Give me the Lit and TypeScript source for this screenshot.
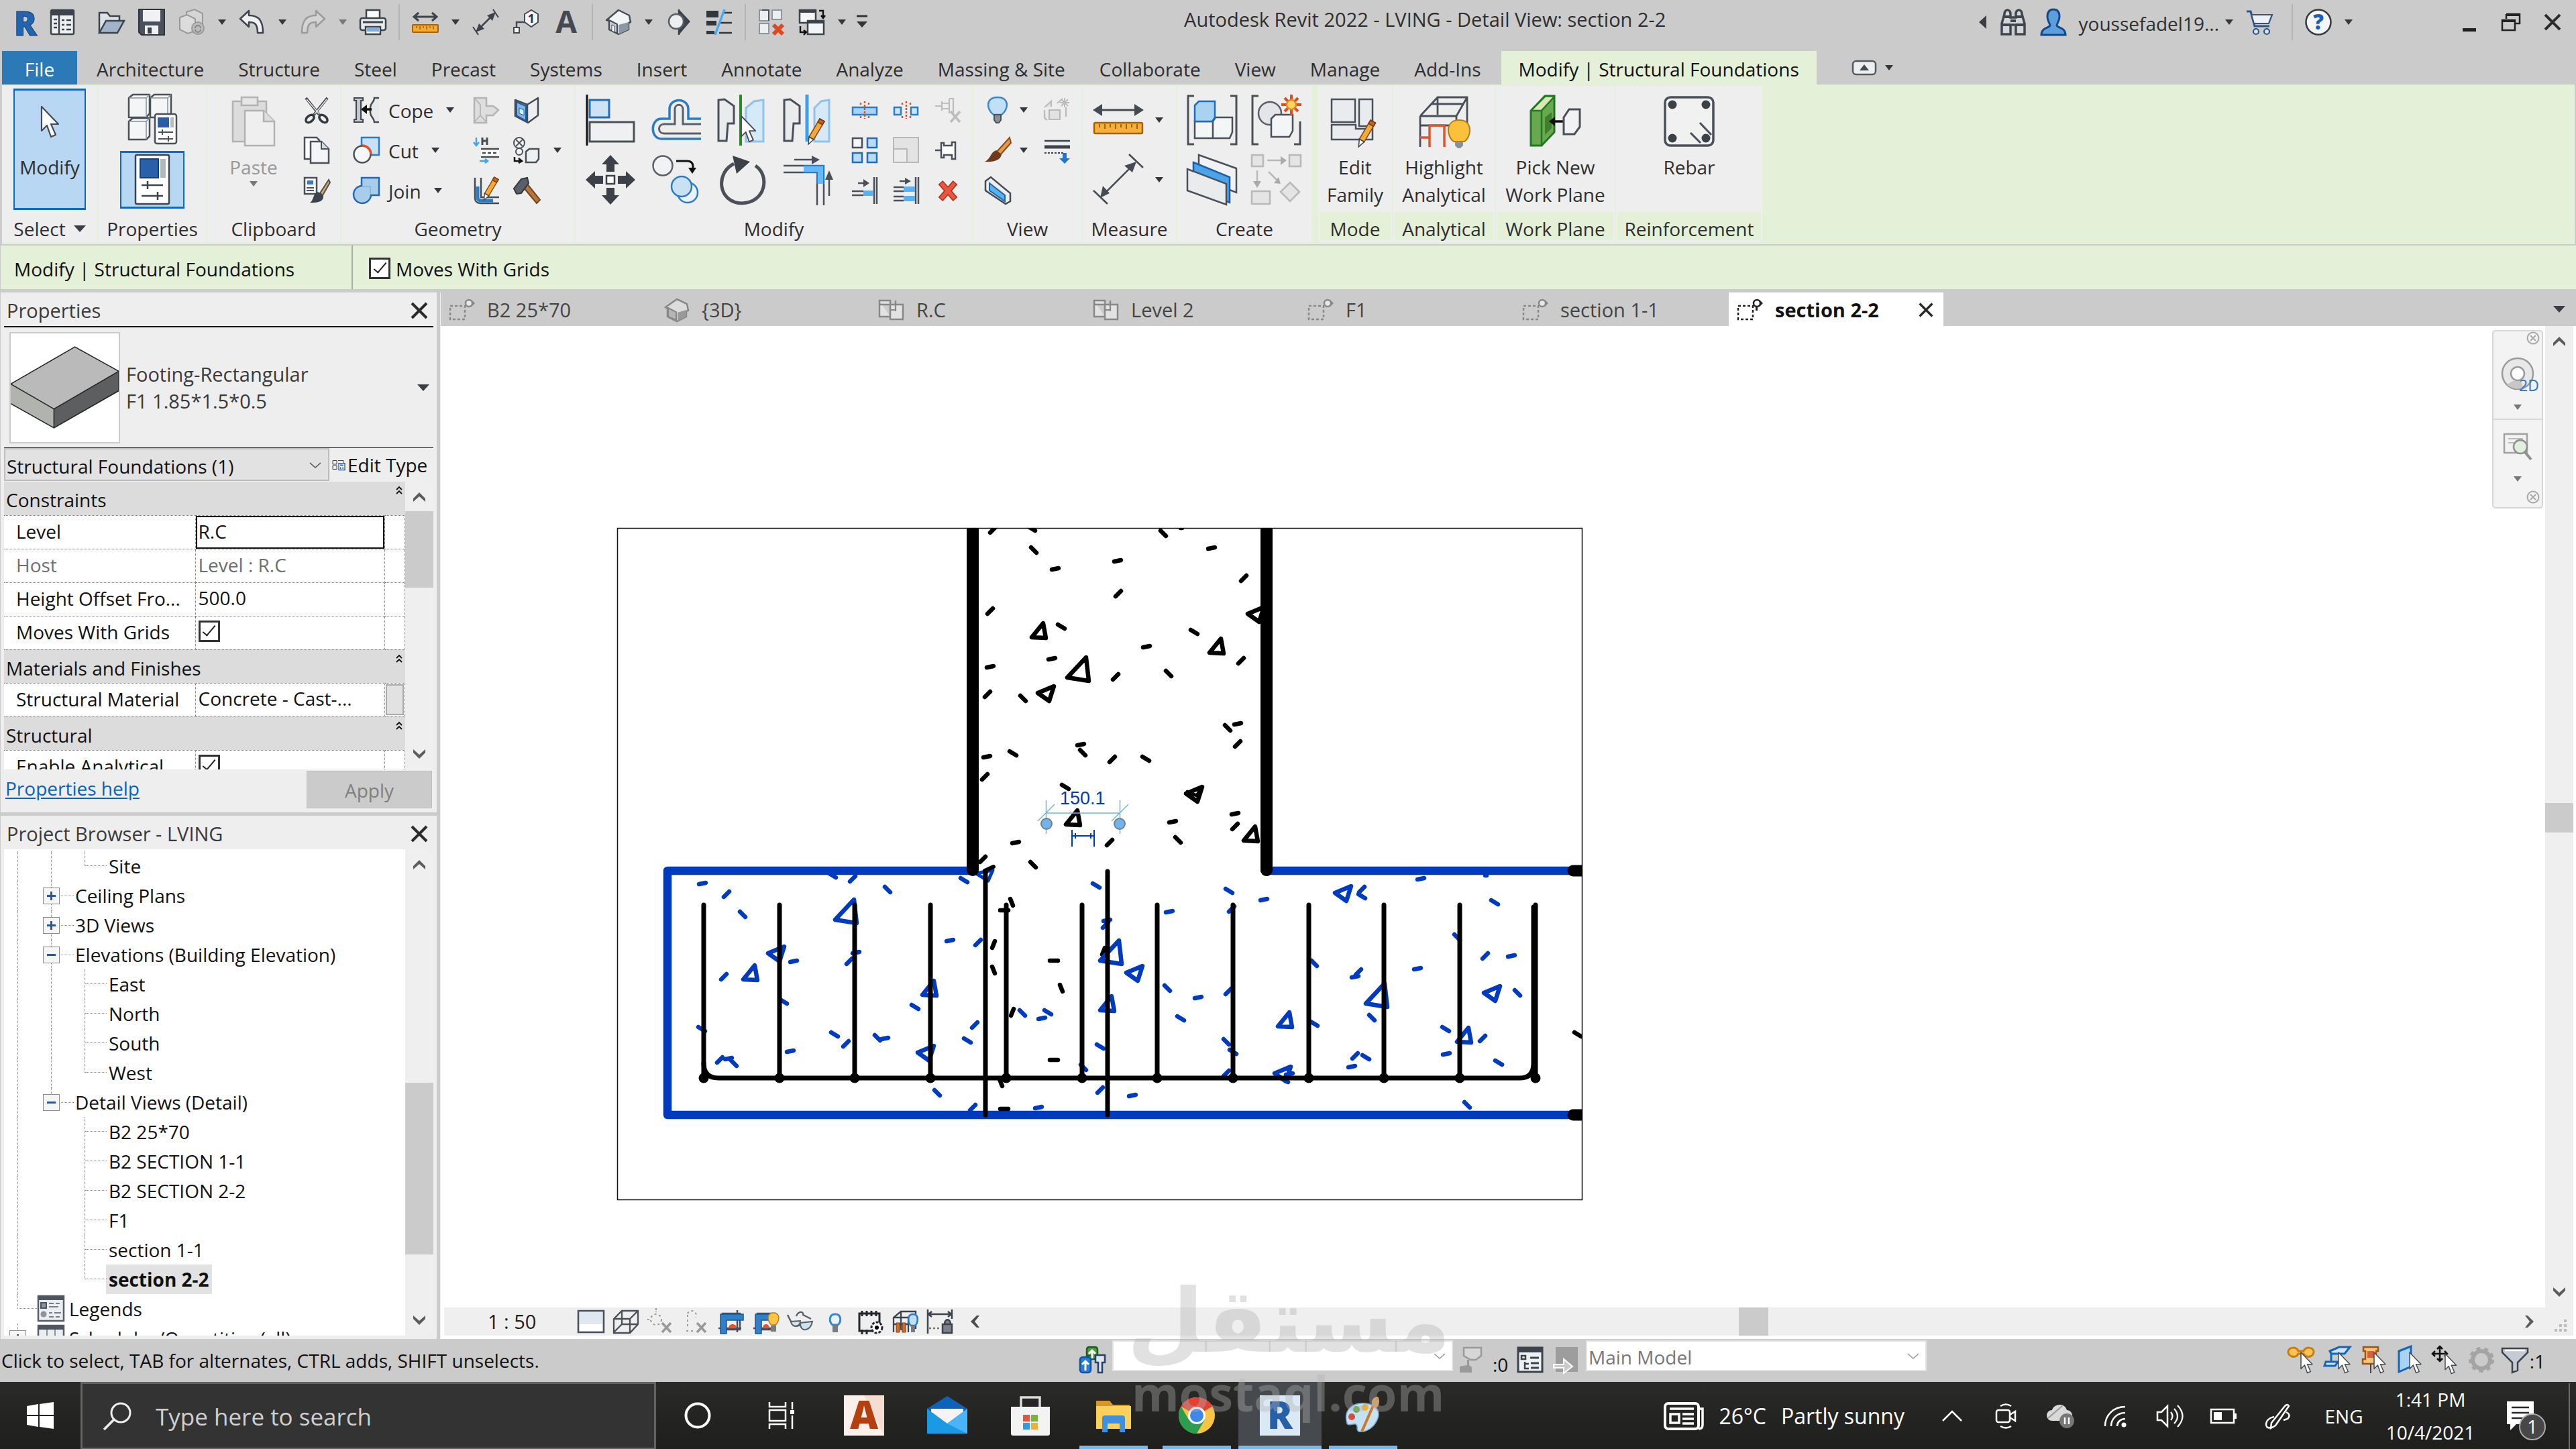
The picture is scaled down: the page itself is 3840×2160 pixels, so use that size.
import { LitElement, html, svg, css, nothing, SVGTemplateResult, TemplateResult } from "lit";
import { customElement } from "lit/decorators.js";

/* ---------- icon artwork ---------- */

const pencil = (x: number, y: number, k = 1) => svg`<g transform="translate(${x} ${y}) scale(${k})">
  <path d="M22 0l7 4-16 27-7-4z" fill="#f5a93b" stroke="#7a4a12" stroke-width="1.5"/><path d="M22 0l7 4-3 5-7-4z" fill="#c9601c" stroke="#7a3a12" stroke-width="1.5"/>
  <path d="M6 27l7 4-8 7z" fill="#fff" stroke="#444" stroke-width="1.5"/></g>`;
const cursor = (x: number, y: number, k = 1) => svg`<path transform="translate(${x} ${y}) scale(${k})" d="M0 0v36l8-8 6 17 7-3-7-16h11z" fill="#fff" stroke="#454a52" stroke-width="2.2" stroke-linejoin="round"/>`;
const cubes = (x: number, y: number, k = 1) => svg`<g transform="translate(${x} ${y}) scale(${k})" stroke="#4a505a" stroke-width="2.5" fill="#f4f5f6" stroke-linejoin="round">
  <path d="M1 6l6-5h25v28l-5 6H1zM33 6l6-5h25v28l-5 6H33zM1 41l6-5h25v27l-5 5H1z"/><path d="M1 6h26v29M33 6h26v29M1 41h26v27M27 6l5-5M59 6l5-5M27 41l5-5" fill="none" stroke="#8b9098" stroke-width="1.5"/></g>`;

const S: Record<string, [number, number, SVGTemplateResult]> = {
  appR: [40, 52, svg`<text x="20" y="46" font-size="50" font-weight="900" text-anchor="middle" fill="#2464ad" stroke="#153f77" stroke-width="1">R</text>`],
  home: [40, 40, svg`<rect x="3" y="2" width="34" height="36" rx="2" fill="#eef0f2" stroke="#3d434c" stroke-width="2.5"/><path d="M3 3h34v7H3z" fill="#3d434c"/><path d="M15 10v27" stroke="#3d434c" stroke-width="2.5"/><path d="M7 16h5M7 22h5M7 28h5M19 17h4M26 17h7M19 24h4M26 24h7M19 31h4M26 31h7" stroke="#3d434c" stroke-width="2.5"/>`],
  open: [40, 40, svg`<path d="M2 36V6h12l4 5h14v8" fill="#dde3e8" stroke="#3d434c" stroke-width="2.5"/><path d="M2 36l10-18h27L29 36z" fill="#9fb4c8" stroke="#3d434c" stroke-width="2.5"/>`],
  save: [40, 40, svg`<path d="M1 1h38v38H5l-4-4z" fill="#4a515c" stroke="#2e343c" stroke-width="2"/><path d="M7 2h26v17H7z" fill="#f0f1f2"/><path d="M10 25h20v13H10z" fill="#f0f1f2"/><path d="M14 28h6v9h-6z" fill="#3d434c"/>`],
  sync: [40, 40, svg`<path d="M12 5l12-4 12 6v18l-12 5-12-6z" fill="#d5d5d5" stroke="#999" stroke-width="2"/><path d="M2 13l11-4 12 6v18l-11 4-12-6z" fill="#dcdcdc" stroke="#999" stroke-width="2"/><circle cx="29" cy="29" r="9" fill="#bbb" stroke="#9a9a9a" stroke-width="2"/><path d="M25 29a4 4 0 0 1 8 0M33 31a4 4 0 0 1-8 0" stroke="#888" stroke-width="2" fill="none"/>`],
  undo: [40, 40, svg`<path d="M15 3L2 15l13 12v-7c8 0 13 2 13 16h8C36 18 30 10 15 10z" fill="#eff1f2" stroke="#3d434c" stroke-width="2.5" stroke-linejoin="round"/>`],
  redo: [40, 40, svg`<path d="M25 3l13 12-13 12v-7c-8 0-13 2-13 16H4C4 18 10 10 25 10z" fill="#d4d4d4" stroke="#9b9b9b" stroke-width="2.5" stroke-linejoin="round"/>`],
  print: [40, 40, svg`<path d="M10 2h20v13H10z" fill="#fafafa" stroke="#3d434c" stroke-width="2.5"/><rect x="1" y="14" width="38" height="18" rx="3" fill="#e8eaec" stroke="#3d434c" stroke-width="2.5"/><path d="M5 20h30" stroke="#3d434c" stroke-width="3"/><path d="M9 27h22v11H9z" fill="#fafafa" stroke="#3d434c" stroke-width="2.5"/><path d="M11 29h18v5H11z" fill="#79aede"/>`],
  measure: [40, 40, svg`<path d="M4 12h32M10 6l-7 6 7 6M30 6l7 6-7 6" stroke="#3d434c" stroke-width="3" fill="none"/><rect x="1" y="24" width="38" height="11" rx="1" fill="#f3ab35" stroke="#a7610c" stroke-width="2"/><path d="M7 26v3M12 26v5M17 26v3M22 26v5M27 26v3M32 26v5" stroke="#a7610c" stroke-width="1.5"/>`],
  dim: [40, 40, svg`<path d="M10 30L30 10" stroke="#3d434c" stroke-width="2.5"/><path d="M5 35l5-13 8 8zM35 5L22 10l8 8z" fill="#3d434c"/><path d="M31 1l8 12M1 27l8 12" stroke="#3d434c" stroke-width="2"/>`],
  tag: [40, 40, svg`<path d="M18 8l10-6 10 6v12l-10 7-10-7z" fill="#f5f6f7" stroke="#454b54" stroke-width="2"/><text x="28" y="21" font-size="18" text-anchor="middle" font-weight="700" fill="#2f353c">1</text><path d="M18 20H6v10" fill="none" stroke="#454b54" stroke-width="2.5"/><path d="M2 28h8v8H2z" fill="#fff" stroke="#454b54" stroke-width="2"/>`],
  textA: [40, 40, svg`<text x="20" y="36" font-size="46" font-weight="700" text-anchor="middle" fill="#454a51">A</text>`],
  house: [40, 40, svg`<path d="M2 17L20 2l16 8 2 10-3 1v10l-15 7-14-7V18z" fill="#f3f4f5" stroke="#454b54" stroke-width="2.4" stroke-linejoin="round"/><path d="M6 17l12 6v14L6 31z" fill="#bfc6ce" stroke="#454b54" stroke-width="2"/><path d="M20 24l15-4v11l-15 7z" fill="#8d98a5"/><path d="M10 24l4 2v9l-4-2z" fill="#fff" stroke="#454b54"/>`],
  section: [40, 40, svg`<path d="M20 1l17 18-17 20z" fill="#3d434c"/><path d="M20 1v38" stroke="#3d434c" stroke-width="2.5"/><circle cx="16" cy="19" r="11" fill="#eceeef" stroke="#5a6069" stroke-width="2.5"/>`],
  thin: [40, 40, svg`<path d="M1 3h18v10H1zM1 18h15v7H1zM1 33h12v5H1z" fill="#32373f"/><path d="M25 6h14M22 21h17M20 36h19" stroke="#32373f" stroke-width="2.5"/><path d="M28 1L14 39" stroke="#4aa9f0" stroke-width="3.5"/>`],
  closeHidden: [40, 40, svg`<path d="M2 2h14v16H2zM21 2h14v14H21zM2 22h14v15H2z" fill="#eceeef" stroke="#8f959d" stroke-width="2"/><path d="M6 2h10v16" fill="none" stroke="#4a505a" stroke-width="2"/><path d="M23 24l14 14M37 24L23 38" stroke="#dd4a22" stroke-width="6"/>`],
  switchWin: [40, 40, svg`<path d="M2 2h24v19H2z" fill="#f4f5f6" stroke="#3d434c" stroke-width="2.5"/><path d="M2 2h24v4H2zM14 18h24v5H14z" fill="#3d434c"/><path d="M14 18h24v20H14z" fill="#f4f5f6" stroke="#3d434c" stroke-width="2.5"/><path d="M14 18h24v4H14z" fill="#3d434c"/><path d="M31 3h6v10M34 10l3 4 3-4M3 26v9h8M8 32l4 3-4 4" stroke="#111" stroke-width="2.4" fill="none"/>`],
  custom: [30, 24, svg`<path d="M7 3h16" stroke="#333" stroke-width="3"/><path d="M7 11h16l-8 9z" fill="#333"/>`],
  arrow: [12, 8, svg`<path d="M0 0h12L6 8z" fill="#33383f"/>`],
  arrowG: [12, 8, svg`<path d="M0 0h12L6 8z" fill="#777"/>`],
  arrowL: [18, 10, svg`<path d="M0 0h18L9 10z" fill="#3a3f46"/>`],
  left: [12, 20, svg`<path d="M11 0v20L0 10z" fill="#3a3f46"/>`],
  binoc: [40, 40, svg`<path d="M7 8c0-8 9-8 9 0v5h8V8c0-8 9-8 9 0l4 14v16H24V24h-8v14H3V22z" fill="#d3d6da" stroke="#41464e" stroke-width="3.500"/><path d="M4 24h12M24 24h12M7 12h9M24 12h9M16 18h8" stroke="#41464e" stroke-width="4"/>`],
  user: [40, 40, svg`<path d="M20 1c7 0 9 5 9 11 0 6-3 8-4 13 2 4 13 3 13 14H2c0-11 11-10 13-14-1-5-4-7-4-13 0-6 2-11 9-11z" fill="#5c9fdd" stroke="#17498a" stroke-width="3"/>`],
  cart: [40, 40, svg`<path d="M1 4h6l6 22h22" fill="none" stroke="#2f5584" stroke-width="3"/><path d="M8 9h31l-5 13H12z" fill="#eef2f6" stroke="#2f5584" stroke-width="2.2"/><circle cx="15" cy="34" r="4" fill="#dfe6ee" stroke="#2f5584" stroke-width="2.2"/><circle cx="31" cy="34" r="4" fill="#dfe6ee" stroke="#2f5584" stroke-width="2.2"/>`],
  help: [40, 40, svg`<circle cx="20" cy="20" r="18.500" fill="#f4f6f8" stroke="#33383f" stroke-width="2.5"/><text x="20" y="31" font-size="31" font-weight="800" text-anchor="middle" fill="#1c5fb8">?</text>`],
  min: [30, 30, svg`<path d="M5 24h20v5H5z" fill="#222"/>`],
  restore: [32, 30, svg`<path d="M9 3h20v14H22M9 3v7M3 12h19v15H3z" fill="none" stroke="#222" stroke-width="2.5"/><path d="M9 2h20v4H9zM2 11h21v4H2z" fill="#222"/>`],
  close: [28, 28, svg`<path d="M3 3l22 22M25 3L3 25" stroke="#2b2b2b" stroke-width="4"/>`],
  ribMin: [38, 24, svg`<rect x="2" y="2" width="34" height="20" rx="5" fill="#eceef0" stroke="#545961" stroke-width="2.5"/><path d="M19 7l7 9H12z" fill="#454a52"/>`],

  cursorBig: [40, 52, cursor(8, 2, 1)],
  typeProps: [76, 76, svg`${cubes(2, 0, 1)}<rect x="42" y="30" width="32" height="44" rx="3" fill="#fff" stroke="#4a505a" stroke-width="2.5"/><rect x="46" y="35" width="17" height="15" fill="#2a5ea5"/><path d="M65 35h5v15h-5z" fill="#b7bcc3"/><path d="M47 57h22M53 53v8M47 67h22M62 63v8" stroke="#4a505a" stroke-width="2"/>`],
  props: [56, 76, svg`<rect x="3" y="1" width="50" height="73" rx="2" fill="#fff" stroke="#3f454e" stroke-width="2.5"/><rect x="10" y="7" width="27" height="28" fill="#2960a8" stroke="#173f78" stroke-width="2"/><path d="M40 7h8v28h-8z" fill="#b2b8c0"/><path d="M12 46h32M21 40v12M12 62h32M36 56v12" stroke="#3f454e" stroke-width="2.5"/>`],
  paste: [66, 76, svg`<path d="M2 8h50v60H2z" fill="#dcdcdc" stroke="#b2b2b2" stroke-width="2.5"/><path d="M15 2h24v12H15z" fill="#e6e6e6" stroke="#b2b2b2" stroke-width="2.5"/><path d="M20 22h28l16 16v36H20z" fill="#efefef" stroke="#b2b2b2" stroke-width="2.500"/><path d="M48 22v16h16" fill="#ddd" stroke="#b2b2b2" stroke-width="2.5"/>`],
  cut: [40, 40, svg`<path d="M4 2l20 25M36 2L16 27" stroke="#454a52" stroke-width="4"/><path d="M5 4l19 22M35 4L17 26" stroke="#f2f2f2" stroke-width="1.3"/><ellipse cx="10" cy="33" rx="7" ry="4.500" transform="rotate(-40 10 33)" fill="none" stroke="#33383f" stroke-width="3.5"/><ellipse cx="30" cy="33" rx="7" ry="4.500" transform="rotate(40 30 33)" fill="none" stroke="#33383f" stroke-width="3.5"/>`],
  copy: [40, 40, svg`<path d="M2 1h18l4 4v28H2z" fill="#fff" stroke="#4a505a" stroke-width="2.5"/><path d="M11 7h16l11 11v21H11z" fill="#f4f5f6" stroke="#4a505a" stroke-width="2.5"/><path d="M27 7v11h11" fill="#d5d9dd" stroke="#4a505a" stroke-width="2"/>`],
  match: [40, 40, svg`<path d="M2 1h18v24H2z" fill="#fff" stroke="#4a505a" stroke-width="2.5"/><path d="M6 5h9v6H6z" fill="#3b79c4"/><path d="M5 16h11M5 20h11" stroke="#4a505a" stroke-width="2"/><path d="M38 4L25 24l4 3L40 8z" fill="#e3a956" stroke="#4a505a" stroke-width="2"/><path d="M22 22l8 6c1 8-8 11-20 10 6-3 4-14 12-16z" fill="#3d434c"/>`],
  cope: [40, 40, svg`<path d="M2 2h13v4h-3v28h3v4H2v-4h3V6H2z" fill="#c8ccd1" stroke="#454b54" stroke-width="2.2"/><path d="M39 2h-7c0 6-6 8-6 14v8c0 6 6 8 6 14h7" fill="#e8e9eb" stroke="#454b54" stroke-width="2.5"/><path d="M28 19H17" stroke="#111" stroke-width="3.5"/><path d="M12 19l9-7v14z" fill="#111"/>`],
  cutGeo: [40, 40, svg`<path d="M13 1h26v26H13z" fill="#c7e1f5" stroke="#2d7bc4" stroke-width="2.5"/><circle cx="14" cy="26" r="12.500" fill="#f6f7f8" stroke="#4a505a" stroke-width="2.5"/><path d="M14 13a13 13 0 0 1 13 13" fill="none" stroke="#e0532c" stroke-width="3.5"/>`],
  join: [40, 40, svg`<path d="M13 1h26v26H27a13 13 0 1 1-14-14z" fill="#a8cdea" stroke="#2569b0" stroke-width="2.5"/><path d="M14 14h12v12" fill="none" stroke="#80b3de" stroke-width="1.5"/>`],
  copeG: [40, 40, svg`<path d="M2 2h18v12h10l8 6-8 8H20v11H2z" fill="#dedede" stroke="#b4b4b4" stroke-width="2.5"/><path d="M2 38l9-10V12L2 2M11 28l9 10" fill="none" stroke="#b4b4b4" stroke-width="1.8"/>`],
  wallOpen: [40, 40, svg`<path d="M3 5l18 7L37 2v26L22 39 3 29z" fill="#eceef0" stroke="#454b54" stroke-width="2.5" stroke-linejoin="round"/><path d="M21 12v26" stroke="#454b54" stroke-width="2.5"/><path d="M5 8l14 6v22L5 28z" fill="#7cb5e6" stroke="#23598f" stroke-width="2"/><path d="M9 17l7 3v8l-7-3z" fill="#d9ecfa" stroke="#23598f"/>`],
  beam: [40, 40, svg`<path d="M5 1v10M1 8l4 5 4-5" stroke="#43a3ec" stroke-width="2.5" fill="none"/><path d="M14 1v11M21 1v11M14 6h7" stroke="#454b54" stroke-width="3"/><path d="M12 18h27v12H12z" fill="#fff"/><path d="M12 18h27M12 30h27" stroke="#454b54" stroke-width="2.5"/><path d="M14 24h5M22 24h5M30 24h5" stroke="#454b54" stroke-width="2.5"/><path d="M10 36h11M18 33l4 3-4 3" stroke="#43a3ec" stroke-width="2.5" fill="none"/>`],
  split: [40, 40, svg`<circle cx="9" cy="9" r="8" fill="#f2f3f4" stroke="#4a505a" stroke-width="2"/><path d="M4 4l10 10M14 4L4 14" stroke="#4a505a" stroke-width="1.8"/><circle cx="9" cy="22" r="5" fill="#f2f3f4" stroke="#4a505a" stroke-width="2"/><path d="M2 30v6h10M8 32l5 4-5 3" stroke="#111" stroke-width="2.5" fill="none"/><path d="M19 22l5-4h14v15l-4 5H19z" fill="#eef0f1" stroke="#4a505a" stroke-width="2.5"/>`],
  wallJoin: [40, 40, svg`<path d="M3 1v30c0 5 3 8 8 8h28M12 1v29h27" stroke="#454b54" stroke-width="2.5" fill="none"/><path d="M7 14v16c0 4 2 5 5 5h18" stroke="#2d7bc4" stroke-width="5" fill="none"/>${pencil(12, 0, 0.9)}`],
  demolish: [40, 40, svg`<path d="M14 14l6-5 20 25-5 5z" fill="#b8743c" stroke="#6e431e" stroke-width="2"/><path d="M1 17L12 3l9-2 2 8-11 15-7 1z" fill="#59606b" stroke="#33383f" stroke-width="2"/>`],

  align: [76, 76, svg`<path d="M3 0v76" stroke="#111" stroke-width="3"/><rect x="7" y="8" width="29" height="26" fill="#cbe3f5" stroke="#1f6dbb" stroke-width="3"/><rect x="7" y="41" width="66" height="29" fill="#eff0f2" stroke="#4a505a" stroke-width="3"/>`],
  offset: [76, 76, svg`<path d="M75 36H56V22c0-18-28-18-28 0v14H16c-17 0-17 30 0 30h59" fill="none" stroke="#2d7bc4" stroke-width="3.5"/><path d="M75 44H48V22c0-9-12-9-12 0v22H20c-10 0-10 14 0 14h55" fill="none" stroke="#5a6069" stroke-width="3"/>`],
  mirrorPick: [76, 76, svg`<path d="M3 8l9-1 14 10v26h-9l-2 26H3z" fill="#e9ebed" stroke="#4a505a" stroke-width="3"/><path d="M70 8L56 10 44 20v50h26z" fill="#d6e9f7" stroke="#8fc3ea" stroke-width="3"/><path d="M36 0v76" stroke="#2a8a2a" stroke-width="4"/>${cursor(37, 32, 0.85)}`],
  mirrorDraw: [76, 76, svg`<path d="M3 8l9-1 14 10v26h-9l-2 26H3z" fill="#e9ebed" stroke="#4a505a" stroke-width="3"/><path d="M70 8L58 10 48 20v50h22z" fill="#d6e9f7" stroke="#8fc3ea" stroke-width="3"/><path d="M37 0v70" stroke="#419ee8" stroke-width="5"/>${pencil(34, 36, 1)}`],
  move: [76, 76, svg`<path d="M38 1l13 14h-7v11H32V15h-7zM38 75l13-14h-7V50H32v11h-7zM1 38l14-13v7h12v12H15v7zM75 38L61 25v7H49v12h12v7z" fill="#3b4049"/><rect x="32" y="32" width="12" height="12" fill="#fff" stroke="#3b4049" stroke-width="2.5"/>`],
  copyEl: [76, 76, svg`<circle cx="18" cy="17" r="14.500" fill="#f1f2f3" stroke="#5a6069" stroke-width="2.5"/><path d="M38 10h16c6 0 9 3 9 8v7" fill="none" stroke="#111" stroke-width="3"/><path d="M56 20h12l-6 9z" fill="#111"/><circle cx="55" cy="57" r="15" fill="#e8f3fb" stroke="#2d7bc4" stroke-width="2.5"/><circle cx="46" cy="48" r="15" fill="#c8e1f3" stroke="#2d7bc4" stroke-width="2.5"/>`],
  rotate: [76, 76, svg`<path d="M26 14C-2 28 2 72 38 73c36-1 42-42 20-56" fill="none" stroke="#4a5059" stroke-width="5"/><path d="M24 2l26 9-20 18z" fill="#3b4049"/>`],
  trim: [76, 76, svg`<path d="M18 8h30" stroke="#4a505a" stroke-width="2.5"/><path d="M44 2l12 6-12 7zM70 24l-6 14h12z" fill="#4a505a"/><path d="M2 17h30M2 27h30M52 44v32M62 44v32" stroke="#4a505a" stroke-width="2.5"/><path d="M32 17h30v27M32 27h20v17" stroke="#2d7bc4" stroke-width="2.5" fill="none"/><path d="M32 22h25v22" stroke="#63baf6" stroke-width="8" fill="none"/><path d="M70 34v28" stroke="#4a505a" stroke-width="2.5"/>`],
  splitEl: [40, 40, svg`<rect x="2" y="16" width="36" height="11" fill="#a7d3f5" stroke="#2d7bc4" stroke-width="2.5"/><path d="M20 7v26M14 9v5M26 9v5M14 29v5M26 29v5" stroke="#d4552b" stroke-width="2.5" stroke-dasharray="3 2"/>`],
  splitGap: [40, 40, svg`<rect x="2" y="16" width="10" height="11" fill="#cfe5f6" stroke="#2d7bc4" stroke-width="2.5"/><rect x="27" y="16" width="10" height="11" fill="#cfe5f6" stroke="#2d7bc4" stroke-width="2.5"/><path d="M20 7v26M14 9v5M26 9v5M14 29v5M26 29v5" stroke="#d4552b" stroke-width="2.5" stroke-dasharray="3 2"/>`],
  unpin: [40, 40, svg`<path d="M1 14h10M11 7v14M11 10h10M11 18h10M22 3v22M22 3h6v22" stroke="#bdbdbd" stroke-width="2.2" fill="none"/><path d="M24 22l14 16M38 22L24 38" stroke="#bdbdbd" stroke-width="3.5"/>`],
  array: [40, 40, svg`<path d="M2 2h14v14H2z" fill="#f5f6f7" stroke="#4a505a" stroke-width="2.5"/><path d="M24 2h14v14H24zM2 24h14v14H2zM24 24h14v14H24z" fill="#b9dbf4" stroke="#1f6dbb" stroke-width="2.5"/>`],
  scale: [40, 40, svg`<path d="M1 1h37v37H1z" fill="#e3e3e3" stroke="#b8b8b8" stroke-width="2"/><path d="M1 18h20v20H1z" fill="#ececec" stroke="#b8b8b8" stroke-width="2"/>`],
  pin: [40, 40, svg`<path d="M1 20h9" stroke="#4a505a" stroke-width="2.5"/><path d="M10 9h4v4h12V8h5v25h-5v-6H14v4h-4z" fill="#fff" stroke="#4a505a" stroke-width="2.5"/>`],
  extend1: [40, 40, svg`<path d="M10 9h12M34 0v40M38 0v40" stroke="#4a505a" stroke-width="2.5"/><path d="M18 3l9 6-9 6z" fill="#4a505a"/><path d="M1 21h17M1 27h17" stroke="#4a505a" stroke-width="2.5"/><path d="M18 24h14" stroke="#58b1f2" stroke-width="8"/>`],
  extend2: [40, 40, svg`<path d="M10 6h12M34 0v40M38 0v40" stroke="#4a505a" stroke-width="2.5"/><path d="M18 1l9 5-9 5z" fill="#4a505a"/><path d="M1 15h15M1 21h15M1 29h15M1 35h15" stroke="#4a505a" stroke-width="2.5"/><path d="M16 18h17M16 32h17" stroke="#58b1f2" stroke-width="8"/>`],
  del: [40, 40, svg`<path d="M9 8l22 25M31 8L9 33" stroke="#a9301a" stroke-width="9"/><path d="M10 9l20 23M30 9L10 32" stroke="#ea5540" stroke-width="6"/>`],
  bulb: [40, 40, svg`<path d="M20 1c18 0 17 18 6 26H14C3 19 2 1 20 1z" fill="#bfe0f8" stroke="#3f86c4" stroke-width="2.500"/><path d="M15 27h10v8l-3 4h-4l-3-4z" fill="#8a9099" stroke="#4a505a" stroke-width="2"/>`],
  displace: [40, 40, svg`<path d="M8 20h16v14H8zM1 16l10-9v8M20 10l8-7M33 16v14M1 20v12l4 3" fill="#e2e2e2" stroke="#bbb" stroke-width="2.2"/><path d="M31 2v14M24 9h14M26 4l10 10M36 4L26 14" stroke="#bbb" stroke-width="2"/>`],
  paint: [40, 40, svg`<path d="M38 1l2 8-16 18-6-4z" fill="#e39a4c" stroke="#8a4a18" stroke-width="2"/><path d="M18 20l8 6c-1 8-10 12-25 11 9-4 8-14 17-17z" fill="#6c3a1c"/>`],
  lineweight: [40, 40, svg`<path d="M1 6h38" stroke="#3d434c" stroke-width="2.5"/><path d="M1 15h38" stroke="#3d434c" stroke-width="5"/><path d="M1 24h30" stroke="#3d434c" stroke-width="2.2" stroke-dasharray="3 2"/><path d="M28 24h6v8h5l-8 8-8-8h5z" fill="#2476cc"/>`],
  linework: [40, 40, svg`<path d="M2 6l8-6 29 24v12l-7 4L2 20z" fill="#eceef0" stroke="#454b54" stroke-width="2.5"/><path d="M8 9l23 18v9L8 20z" fill="#58b1f2" stroke="#22659f" stroke-width="2"/>`],
  measureBig: [76, 76, svg`<path d="M8 23h60" stroke="#454b54" stroke-width="3"/><path d="M0 23l14-9v18zM76 23l-14-9v18z" fill="#454b54"/><rect x="2" y="42" width="72" height="16" rx="2" fill="#f5b03c" stroke="#a7610c" stroke-width="2.500"/><path d="M10 44v5M18 44v7M26 44v5M34 44v7M42 44v5M50 44v7M58 44v5M66 44v7" stroke="#a7610c" stroke-width="2"/>`],
  dimBig: [76, 76, svg`<path d="M16 60L60 16" stroke="#454b54" stroke-width="2.5"/><path d="M11 65l4-18 10 11zM65 11L47 17l12 10z" fill="#454b54"/><path d="M54 0l21 20M1 54l21 20" stroke="#454b54" stroke-width="2.5"/>`],
  group: [76, 76, svg`<path d="M11 2H2v72h9M65 2h9v72h-9" fill="none" stroke="#4a505a" stroke-width="3"/><path d="M12 40v25h27V40zM39 40l4-6h25v22l-4 9H39z" fill="#f4f5f6" stroke="#4a505a" stroke-width="2.5"/><path d="M12 16l6-6h24v24l-4 6H12z" fill="#a9d2f1" stroke="#1f6dbb" stroke-width="2.5"/>`],
  groupNew: [76, 76, svg`<path d="M11 2H2v72h9M73 40v34h-9" fill="none" stroke="#4a505a" stroke-width="3"/><circle cx="28" cy="28" r="17" fill="#e3e5e8" stroke="#5a6069" stroke-width="2.5"/><path d="M30 36l6-6h26v24l-5 9H30z" fill="#f4f5f6" stroke="#4a505a" stroke-width="2.5"/><path d="M60 0v30M45 15h30M50 5l20 20M70 5L50 25" stroke="#dd4f1f" stroke-width="4"/><circle cx="60" cy="15" r="7" fill="#ffd557" stroke="#e8862a" stroke-width="2.5"/>`],
  assembly: [76, 76, svg`<path d="M18 1l56 20v36l-56-22z" fill="#f1f2f3" stroke="#4a505a" stroke-width="2.5"/><path d="M10 12l54 22v38L10 50z" fill="#4ba3ea" stroke="#1b5ea5" stroke-width="2.5"/><path d="M1 22l58 22v31L1 54z" fill="#e9ebed" stroke="#4a505a" stroke-width="2.500"/>`],
  similar: [76, 76, svg`<g fill="#e4e4e4" stroke="#b9b9b9" stroke-width="2.500"><path d="M1 1h17v17H1zM57 1h17v17H57zM1 55h27v19H1zM58 42l14 14-14 14-14-14z"/><path d="M24 9h22M9 24v20M26 26l14 14" /></g><path d="M44 3l9 6-9 7zM3 40h12l-6 10zM44 44l-10-1 7-9z" fill="#aaa"/>`],
  editFamily: [76, 80, svg`<path d="M3 7h35v34H3zM44 7h20v40H44zM3 45h36v6h25v16H3z" fill="#e9ebee" stroke="#4a505a" stroke-width="2.5"/>${pencil(38, 38, 1.05)}`],
  highlight: [80, 80, svg`<g fill="none" stroke="#4a505a" stroke-width="2.8"><path d="M4 32L30 4h44v46M4 32h54M58 32L74 4M4 78V32M30 4v26M58 32v14M4 46h54M20 14h48"/></g><path d="M18 78V46h22v32M4 64h14" stroke="#e0562b" stroke-width="3.500" fill="none"/><path d="M62 38c22 0 18 26 8 32H54c-10-6-14-32 8-32z" fill="#fbc13a" stroke="#b57b16" stroke-width="2"/><path d="M56 70h12v6l-4 4h-4l-4-4z" fill="#8a9099"/>`],
  workPlane: [80, 80, svg`<path d="M3 24L24 2h14v54L19 76H3z" fill="#6aa84f" stroke="#1f7a1f" stroke-width="3"/><path d="M6 23L25 4h11L18 23z" fill="#dbe5b6"/><path d="M3 24h16v52M19 24L38 3" fill="none" stroke="#1f7a1f" stroke-width="2.500"/><path d="M24 34l10-8v24l-10 10z" fill="#3f7f2b"/><path d="M52 40H36" stroke="#111" stroke-width="3.5"/><path d="M30 40l9-7v14z" fill="#111"/><path d="M52 34l8-12h16v26l-8 11H52z" fill="#f1f2f3" stroke="#4a505a" stroke-width="3"/>`],
  rebar: [80, 80, svg`<rect x="4" y="4" width="72" height="72" rx="8" fill="#f1f1f1" stroke="#4a505a" stroke-width="3.500"/><g fill="#3b4049"><circle cx="15" cy="15" r="6.500"/><circle cx="65" cy="15" r="6.500"/><circle cx="15" cy="65" r="6.500"/><circle cx="65" cy="65" r="6.500"/></g><path d="M56 42l17 18M42 57l15 15" stroke="#4a505a" stroke-width="3"/>`],

  tabSection: [40, 36, svg`<path d="M2 12h22v20H2z" fill="none" stroke="#888" stroke-width="2.5" stroke-dasharray="4 3"/><path d="M30 14V4" stroke="#888" stroke-width="2.5"/><circle cx="30" cy="8" r="5" fill="#e8e8e8" stroke="#888" stroke-width="2.5"/><path d="M34 3l5 5-5 5z" fill="#888"/>`],
  tabSectionOn: [40, 36, svg`<path d="M2 12h22v20H2z" fill="none" stroke="#222" stroke-width="2.5" stroke-dasharray="4 3"/><circle cx="30" cy="8" r="5" fill="#fff" stroke="#222" stroke-width="2.5"/><path d="M34 3l5 5-5 5zM28 13h3v6h-3z" fill="#222"/>`],
  tab3d: [40, 36, svg`<path d="M3 14L20 2l15 7 2 10-3 1v8l-14 7-14-7V16z" fill="#dcdcdc" stroke="#888" stroke-width="2.500"/><path d="M7 15l12 6v12L7 28z" fill="#b5b5b5" stroke="#888" stroke-width="2"/><path d="M21 22l13-4v10l-13 6z" fill="#999"/>`],
  tabPlan: [40, 36, svg`<path d="M2 4h16v6H2zM2 4v24h16M26 4v6h11v22H18V10h8" fill="#e2e2e2" stroke="#888" stroke-width="2.500"/><path d="M18 18h8M26 10v10" stroke="#888" stroke-width="2.2"/>`],

  editType: [40, 32, svg`<path d="M2 3h12v11H2zM18 3h16v8M2 18h12v11H2z" fill="none" stroke="#444" stroke-width="2"/><path d="M20 11h18v20H20z" fill="#fff" stroke="#24528c" stroke-width="2.5"/><path d="M24 15h10v4H24z" fill="#2d6fc0"/><path d="M24 23h3M31 23h3M24 27h3M31 27h3" stroke="#24528c" stroke-width="2.500"/>`],
  chevD: [18, 9, svg`<path d="M1 1l8 7 8-7" fill="none" stroke="#555" stroke-width="1.6"/>`],
  up: [20, 16, svg`<path d="M1 11l9-9 9 9v5l-9-8-9 8z" fill="#5c5c5c"/>`],
  down: [20, 16, svg`<path d="M1 5l9 9 9-9V0l-9 8-9-8z" fill="#5c5c5c"/>`],
  rightCh: [16, 20, svg`<path d="M4 1l9 9-9 9H0l7-9-7-9z" fill="#5c5c5c"/>`],
  leftCh: [16, 20, svg`<path d="M12 1l-9 9 9 9h4L9 10l7-9z" fill="#4c4c4c"/>`],
  dblUp: [10, 14, svg`<path d="M1 6l4-4 4 4M1 12l4-4 4 4" fill="none" stroke="#111" stroke-width="1.800"/>`],
  legend: [40, 40, svg`<path d="M1 1h38v37H1z" fill="#eceef1" stroke="#555c66" stroke-width="2.500"/><path d="M1 1h38v6H1z" fill="#4d5561"/><path d="M5 11h8v8H5z" fill="#8d949e" stroke="#4d5561" stroke-width="2"/><circle cx="9" cy="28" r="4.500" fill="#8d949e"/><path d="M17 12h7M27 12h6M17 17h14M17 26h5M25 26h10M17 32h7M27 32h6" stroke="#777e89" stroke-width="2.200"/>`],
  sched: [40, 40, svg`<path d="M1 1h38v37H1z" fill="#eceef1" stroke="#555c66" stroke-width="2.500"/><path d="M1 1h38v6H1z" fill="#4d5561"/><path d="M14 7v30M26 7v30M1 17h38M1 27h38" stroke="#8d949e" stroke-width="2"/>`],

  vDetail: [40, 40, svg`<path d="M1 4h38v32H1z" fill="#dfe8f2" stroke="#4a505a" stroke-width="2.5"/><path d="M3 24h34v10H3z" fill="#fff"/>`],
  vCube: [40, 40, svg`<path d="M2 16L14 4h24v20L26 37H2zM2 16h24v20M26 16L38 4M14 4v20H38M14 24L2 36" fill="none" stroke="#4a505a" stroke-width="2.300"/>`],
  vSunOff: [40, 40, svg`<circle cx="13" cy="17" r="8" fill="none" stroke="#999" stroke-width="2" stroke-dasharray="3 4"/><path d="M13 0v6M0 17h4" stroke="#999" stroke-width="2" stroke-dasharray="3 2"/><path d="M22 22l13 14M35 22L22 36" stroke="#999" stroke-width="3.500"/>`],
  vShadowOff: [40, 40, svg`<path d="M8 8c4-8 16-3 12 6M8 10v18M6 34h12" fill="none" stroke="#999" stroke-width="2" stroke-dasharray="3 4"/><path d="M22 22l13 14M35 22L22 36" stroke="#999" stroke-width="3.500"/>`],
  vCrop: [40, 40, svg`<path d="M8 8h26v24H8zM2 30h34M30 3v33" fill="none" stroke="#4a505a" stroke-width="2.500"/><path d="M5 38V9h34v9H14v20z" fill="#2f7fc9" stroke="#1c5698" stroke-width="1.500"/><path d="M17 30c0-8 12-8 12 0z" fill="#e4552e"/>`],
  vCropShow: [40, 40, svg`<path d="M8 8h26v24H8zM2 30h34" fill="none" stroke="#4a505a" stroke-width="2.500"/><path d="M5 38V9h26v9H14v20z" fill="#2f7fc9" stroke="#1c5698" stroke-width="1.500"/><path d="M32 7c12 0 8 15 3 18h-6c-5-3-9-18 3-18z" fill="#ffc44a" stroke="#bb7e18" stroke-width="1.500"/><path d="M28 26h8v9h-8z" fill="#757c86"/><path d="M16 30c0-8 10-8 10 0z" fill="#e4552e"/>`],
  vGlasses: [40, 40, svg`<path d="M1 10l6 12c3 7 12 6 15 0" fill="none" stroke="#5a6069" stroke-width="2.500"/><path d="M14 12c3-8 12-8 10-1M24 10l12 6" fill="none" stroke="#5a6069" stroke-width="2.300"/><path d="M6 20c2 10 14 8 14-1z" fill="#d5e4ee" stroke="#5a6069" stroke-width="2"/><path d="M20 22c-1 14 15 14 18-2z" fill="#cfe3ee" stroke="#5a6069" stroke-width="2"/>`],
  vBulb: [40, 40, svg`<path d="M20 9c10 0 9 12 4 16h-8c-5-4-6-16 4-16z" fill="#e8f4fd" stroke="#3a86cc" stroke-width="3"/><path d="M16 26h8v10h-8z" fill="#757c86"/>`],
  vTemp: [40, 40, svg`<path d="M4 8h30v26H4z" fill="none" stroke="#23272d" stroke-width="3"/><path d="M8 4v8M15 4v8M22 4v8M29 4v8M8 32v7M15 32v7" stroke="#23272d" stroke-width="3"/><circle cx="30" cy="29" r="8" fill="#fff" stroke="#23272d" stroke-width="3" stroke-dasharray="4 2"/><circle cx="30" cy="29" r="3"/>`],
  vAnalytic: [40, 40, svg`<path d="M3 36V14L14 5h22v26M3 14h22M14 5v28M3 24h22M25 14v22" fill="none" stroke="#3d434c" stroke-width="2.300"/><path d="M7 22h5v14H7zM16 22h5v14h-5z" fill="#cf6a2b" stroke="#7f3c12"/><path d="M32 9c10 0 7 14 3 17h-6c-4-3-7-17 3-17z" fill="#bfe0fa" stroke="#2d7bc4" stroke-width="2.500"/><path d="M29 26h6v10h-6z" fill="#757c86"/>`],
  vConstr: [40, 40, svg`<path d="M2 2v36M38 2v14M2 9h36M8 5L3 9l5 4M32 5l5 4-5 4" stroke="#3d434c" stroke-width="2.500" fill="none"/><path d="M4 30h18" stroke="#777" stroke-width="2.500" stroke-dasharray="3 3"/><path d="M24 24h14v13H24zM27 24c0-9 9-9 9 0" fill="#7c828b" stroke="#3d434c" stroke-width="2.500"/>`],

  wheel: [60, 54, svg`<circle cx="26" cy="24" r="23" fill="#e8e8e8" stroke="#9b9b9b" stroke-width="2.500"/><circle cx="26" cy="24" r="10" fill="#fff" stroke="#9b9b9b" stroke-width="2.500"/><path d="M10 40a23 23 0 0 0 24 5l-3-10H19z" fill="#c6c6c6"/><text x="43" y="50" font-size="23" text-anchor="middle" fill="#2c78c8">2D</text>`],
  zoomReg: [44, 44, svg`<path d="M2 3h34v28H2z" fill="#f2f2f2" stroke="#a2a2a2" stroke-width="2.500"/><path d="M8 10h22M8 16h14" stroke="#bbb" stroke-width="2"/><circle cx="26" cy="22" r="10" fill="#dff0dc" stroke="#909090" stroke-width="2.500"/><path d="M33 30l9 11" stroke="#909090" stroke-width="4"/>`],
  circX: [20, 20, svg`<circle cx="10" cy="10" r="8.500" fill="none" stroke="#a8a8a8" stroke-width="2"/><path d="M6 6l8 8M14 6l-8 8" stroke="#a8a8a8" stroke-width="2"/>`],

  worksets: [40, 40, svg`<path d="M12 14V5q0-4 4-4h8q4 0 4 4v14h-9v-5z" fill="#4d9a3f" stroke="#17611a" stroke-width="2.500"/><path d="M20 18V7M15 11l5-5 5 5" stroke="#fff" stroke-width="3" fill="none"/><rect x="2" y="16" width="16" height="23" rx="4" fill="#2c7fd0" stroke="#0e55a4" stroke-width="2.500"/><path d="M10 36V22M5 27l5-5 5 5" stroke="#fff" stroke-width="3" fill="none"/><path d="M25 13h14v11h-4v15h-6V24h-4z" fill="#dfe6ef" stroke="#26416e" stroke-width="2.500"/>`],
  editReq: [40, 40, svg`<path d="M9 2h26v12L27 20h-8L9 14z" fill="#d6d6d6" stroke="#9a9a9a" stroke-width="2.500"/><path d="M14 20v8L3 30v9h18v-8l-4-3v-8z" fill="#999"/>`],
  designOpt: [40, 40, svg`<path d="M2 2h36v36H2z" fill="#eef1f4" stroke="#3d434c" stroke-width="3"/><path d="M2 2h36v7H2z" fill="#3d434c"/><path d="M7 14h6v5H7zM12 23v10h6M12 26h6" fill="none" stroke="#3d434c" stroke-width="2.500"/><path d="M20 17h13M21 25h12M21 32h12" stroke="#3d434c" stroke-width="3"/>`],
  addOpt: [40, 40, svg`<path d="M5 1h33v37H5z" fill="#9d9d9d"/><path d="M2 27h15v-8l13 11-13 10v-8H2z" fill="#cacaca" stroke="#fff" stroke-width="2"/>`],
  selLinks: [44, 42, svg`<path d="M2 8c2-6 12-7 15 0h8c3-7 13-6 15 0 1 8-10 12-15 4h-8c-4 8-16 4-15-4z" fill="#f7c256" stroke="#ca7d0a" stroke-width="3"/>${cursor(21, 10, 0.68)}`],
  selUnder: [44, 42, svg`<path d="M10 8l14-6h16l-8 10H12zM4 24h18l-4 6H2zM12 10v14" fill="#cfe5f6" stroke="#1566b8" stroke-width="3"/>${cursor(23, 10, 0.68)}`],
  selPin: [44, 42, svg`<path d="M6 2h22v6h-3v12h4v7H5v-7h4V8H6z" fill="#f5c67a" stroke="#a5510f" stroke-width="2.500"/><path d="M12 8h10v10H12z" fill="#de5b38"/><path d="M17 27v14" stroke="#444" stroke-width="2"/>${cursor(22, 10, 0.68)}`],
  selFace: [44, 42, svg`<path d="M5 8l18-7v30L5 39z" fill="#a8d3f3" stroke="#1566b8" stroke-width="3"/>${cursor(21, 10, 0.68)}`],
  selDrag: [44, 42, svg`<path d="M12 1v22M1 12h22M8 5l4-4 4 4M8 19l4 4 4-4M5 8l-4 4 4 4M19 8l4 4-4 4" stroke="#111" stroke-width="2.500" fill="none"/>${cursor(20, 12, 0.66)}`],
  gear: [40, 40, svg`<circle cx="20" cy="20" r="13" fill="none" stroke="#a4a4a4" stroke-width="6"/><circle cx="20" cy="20" r="17" fill="none" stroke="#a4a4a4" stroke-width="4" stroke-dasharray="6 6"/>`],
  filter: [40, 40, svg`<path d="M1 3h38v6L24 24v12l-8 3V24L1 9z" fill="#c3ccd5" stroke="#3d434c" stroke-width="2.500"/><path d="M5 6h30" stroke="#fff" stroke-width="2.500"/>`],

  start: [44, 44, svg`<path d="M2 8l17-3v16H2zM21 5l21-3v19H21zM2 23h17v16L2 36zM21 23h21v19l-21-3z" fill="#fff"/>`],
  search: [48, 48, svg`<circle cx="29" cy="18" r="14" fill="none" stroke="#eee" stroke-width="3"/><path d="M19 28L4 43" stroke="#eee" stroke-width="3.500"/>`],
  cortana: [44, 44, svg`<circle cx="22" cy="22" r="17.500" fill="none" stroke="#fff" stroke-width="4"/>`],
  taskview: [44, 44, svg`<path d="M5 2v7h24V2M5 42v-7h24v7M5 14h24v16H5z" fill="none" stroke="#fff" stroke-width="2.500"/><path d="M39 2v11M39 22v20" stroke="#fff" stroke-width="2.500"/><path d="M36 14h6v6h-6z" fill="#fff"/>`],
  autocad: [60, 60, svg`<path d="M0 0h60v60H0z" fill="#fbf0ea"/><path d="M30 0h30v60z" fill="#f6ddd2"/><text x="30" y="50" font-size="58" font-weight="800" text-anchor="middle" fill="#b4400f">A</text>`],
  mail: [60, 60, svg`<path d="M0 20L30 1l30 19v36H0z" fill="#0d63b8"/><path d="M6 20h48v24H6z" fill="#f4f4f4"/><path d="M0 20l30 22 30-22v37H0z" fill="#1b9ae4"/><path d="M60 20v37L30 42z" fill="#4bb4f8"/>`],
  store: [60, 60, svg`<path d="M16 20V3h28v17" fill="none" stroke="#ddd" stroke-width="3.500"/><path d="M1 17h58v40a3 3 0 0 1-3 3H4a3 3 0 0 1-3-3z" fill="#f3f3f3"/><path d="M19 29h10v10H19z" fill="#e4553f"/><path d="M31 29h10v10H31z" fill="#7bb43a"/><path d="M19 41h10v10H19z" fill="#2f9be0"/><path d="M31 41h10v10H31z" fill="#eab13a"/>`],
  folder: [60, 60, svg`<path d="M4 8h20l5 6h25v36H4z" fill="#d9972b"/><path d="M4 16h52v34H4z" fill="#fbd05d"/><path d="M13 55V34q0-4 4-4h26q4 0 4 4v21h-8V42H21v13z" fill="#3d92df"/>`],
  chrome: [60, 60, svg`<circle cx="30" cy="30" r="27" fill="#f6c545"/><path d="M30 30L6.600 16.500a27 27 0 0 1 46.800 0z" fill="#e34133"/><path d="M30 3a27 27 0 0 1 23.400 13.500H30z" fill="#e34133"/><path d="M6.600 16.500A27 27 0 0 0 30 57l11.700-20.200L18.300 36.800z" fill="#2c9e4f"/><circle cx="30" cy="30" r="13" fill="#fff"/><circle cx="30" cy="30" r="10" fill="#3e86e8"/>`],
  revit: [60, 60, svg`<path d="M0 0h60v60H0z" fill="#dbe8f5"/><text x="30" y="50" font-size="56" font-weight="900" text-anchor="middle" fill="#2560a8">R</text>`],
  palette: [60, 60, svg`<path d="M6 42C0 22 14 10 34 12c14 2 22 10 18 22-5 14-18 22-28 20-6-2 0-8-5-11-4-2-10 4-13-1z" fill="#c5e1f4" stroke="#7aa6c8" stroke-width="1.500"/><circle cx="13" cy="32" r="5" fill="#d94b3c"/><circle cx="20" cy="21" r="5" fill="#58a63c"/><circle cx="33" cy="18" r="5" fill="#f0b02d"/><path d="M50 4L28 54" stroke="#c97a2b" stroke-width="4"/><path d="M44 16c-4-8 2-14 8-14 4 6 2 14-3 17z" fill="#d99a5b"/>`],
  news: [60, 42, svg`<rect x="2" y="2" width="50" height="38" rx="5" fill="none" stroke="#fff" stroke-width="4"/><path d="M52 10h6v24q0 6-6 6" fill="none" stroke="#fff" stroke-width="3.500"/><path d="M9 10h36M28 18h17M28 25h17M28 32h17" stroke="#fff" stroke-width="3.500"/><path d="M10 18h13v13H10z" fill="none" stroke="#fff" stroke-width="3.500"/>`],
  chevU: [32, 18, svg`<path d="M2 16L16 2l14 14" fill="none" stroke="#fff" stroke-width="2.500"/>`],
  meet: [36, 40, svg`<rect x="3" y="11" width="20" height="18" rx="3" fill="none" stroke="#fff" stroke-width="2.500"/><path d="M23 18l8-5v14l-8-5M9 5q8-5 16 0M9 35q8 5 16 0" fill="none" stroke="#fff" stroke-width="2.500"/>`],
  cloud: [44, 38, svg`<path d="M9 26a8 8 0 0 1 0-16C12 0 28-1 31 10c10 0 11 16 2 16z" fill="#d9d9d9"/><path d="M3 22L24 4" stroke="#999" stroke-width="2"/><circle cx="31" cy="26" r="11" fill="#777"/><path d="M28 21v10M34 21v10" stroke="#fff" stroke-width="2.500"/>`],
  wifi: [36, 36, svg`<path d="M3 33C3 16 16 4 33 4M12 33c0-11 9-20 21-20M21 33c0-6 5-11 12-11" fill="none" stroke="#fff" stroke-width="2.500"/><circle cx="31" cy="31" r="3.500" fill="#fff"/>`],
  sound: [42, 38, svg`<path d="M3 13h6l9-9v30l-9-9H3z" fill="none" stroke="#fff" stroke-width="2.500"/><path d="M23 13q5 6 0 12M28 8q10 11 0 22M33 3q15 16 0 32" fill="none" stroke="#fff" stroke-width="2.200"/>`],
  battery: [42, 28, svg`<path d="M2 4h34v20H2z" fill="none" stroke="#fff" stroke-width="2.500"/><path d="M6 8h12v12H6z" fill="#fff"/><path d="M37 10h3v8h-3z" fill="#fff"/>`],
  pen: [44, 40, svg`<path d="M12 30L32 5q4-4 6 0L18 34l-7 4z" fill="none" stroke="#fff" stroke-width="2.500"/><path d="M16 21C0 24 2 40 10 37M34 14q8 4 2 10l-6 2" fill="none" stroke="#fff" stroke-width="2.500"/>`],
  notif: [64, 60, svg`<path d="M2 2h40v34H16L7 45V36H2z" fill="#fff"/><path d="M9 11h26M9 19h26M9 27h18" stroke="#2a2a2a" stroke-width="2.500"/><circle cx="40" cy="40" r="19" fill="#474747" stroke="#aaa" stroke-width="2"/><text x="40" y="50" font-size="27" text-anchor="middle" fill="#fff">1</text>`],
};

const icon = (name: string): TemplateResult => {
  const [w, h, art] = S[name];
  return html`<svg class="icon" width=${w} height=${h} viewBox="0 0 ${w} ${h}" aria-hidden="true">${art}</svg>`;
};

const base = css`
  :host { display: block; box-sizing: border-box; font-family: "Open Sans", "Noto Sans", sans-serif; font-size: 28px; line-height: 40px; color: #1e1e1e; }
  *, *::before, *::after { box-sizing: border-box; }
  button { font: inherit; color: inherit; background: none; border: 0; padding: 0; margin: 0; white-space: nowrap; }
  button, a { cursor: default; }
  select, input { font: inherit; color: inherit; margin: 0; border-radius: 0; }
  .icon { display: block; flex: none; overflow: visible; }
  svg text { font-family: "Open Sans", sans-serif; }
  .tick { appearance: none; width: 32px; height: 32px; flex: none; background: #fff; border: 3px solid #333; display: grid; place-items: center; }
  .tick:checked::before { content: ""; width: 9px; height: 20px; border: solid #222; border-width: 0 2px 2px 0; transform: translateY(-3px) rotate(40deg); }
`;

/* ---------- title bar, tabs and ribbon ---------- */

@customElement("rv-titlebar")
class Titlebar extends LitElement {
  static styles = [base, css`
    :host { background: #cbcbcb; color: #2e2e2e; }
    .bar { display: grid; grid-template-columns: auto 1fr auto; height: 76px; padding: 0 4px 10px 8px; }
    .group { display: flex; align-items: center; }
    .cell { width: 60px; height: 56px; display: grid; place-items: center; }
    .home { width: 50px; margin-right: 18px; }
    .drop { width: 30px; height: 56px; display: grid; place-items: center; }
    .sep { width: 18px; height: 56px; display: grid; place-items: center; }
    .sep::before { content: ""; width: 2px; height: 54px; background: #b4b4b4; }
    .title { font: inherit; font-size: 29px; margin: 0; padding: 0 0 8px 8px; align-self: center; text-align: center; white-space: nowrap; }
    .win { width: 62px; }
    .first { margin-left: 134px; }
    .user { padding: 4px 0 0 8px; }
    .shop { margin-right: 10px; }
  `];
  render() {
    const quick = ["open", "save", "sync", ">", "undo", ">", "redo", "<", "print", "|", "measure", ">", "dim", "tag", "textA", "|", "house", ">", "section", "thin", "|", "closeHidden", "switchWin", ">"];
    return html`<header class="bar">
      <div class="group">
        <button class="cell" aria-label="Application menu">${icon("appR")}</button>
        <button class="cell home" aria-label="Home">${icon("home")}</button>
        ${quick.map((q) => q === "|" ? html`<span class="sep"></span>`
          : q === ">" ? html`<button class="drop" aria-label="More">${icon("arrow")}</button>`
          : q === "<" ? html`<button class="drop" aria-label="More" disabled>${icon("arrowG")}</button>`
          : html`<button class="cell" aria-label=${q}>${icon(q)}</button>`)}
        <button class="drop" aria-label="Customize toolbar">${icon("custom")}</button>
      </div>
      <h1 class="title">Autodesk Revit 2022 - LVING - Detail View: section 2-2</h1>
      <div class="group">
        <button class="drop" aria-label="Collapse search">${icon("left")}</button>
        <button class="cell" aria-label="Search">${icon("binoc")}</button>
        <button class="cell" aria-label="Account">${icon("user")}</button>
        <button class="user">youssefadel19...</button>
        <button class="drop" aria-label="Account menu">${icon("arrow")}</button>
        <button class="cell shop" aria-label="App store">${icon("cart")}</button>
        <span class="sep"></span>
        <button class="cell" aria-label="Help">${icon("help")}</button>
        <button class="drop" aria-label="Help menu">${icon("arrow")}</button>
        <button class="cell win first" aria-label="Minimize">${icon("min")}</button>
        <button class="cell win" aria-label="Restore">${icon("restore")}</button>
        <button class="cell win" aria-label="Close">${icon("close")}</button>
      </div>
    </header>`;
  }
}

@customElement("rv-ribbon")
class Ribbon extends LitElement {
  static styles = [base, css`
    :host { background: #cbcbcb; padding-left: 3px; color: #2e2e2e; }
    .tabs { display: flex; height: 50px; align-items: stretch; }
    .tab { padding: 3px 26px 0 25px; }
    .tab.file { background: #2b79b6; color: #fff; width: 112px; padding: 3px 0 0; margin-right: 4px; }
    .tab.on { background: #e5f0d8; color: #111; padding: 3px 26px 0; margin-left: 4px; }
    .state { margin-left: 52px; display: flex; align-items: center; gap: 12px; }
    .panels { display: flex; background: #e5f0d8; padding: 2px 0 3px; margin-right: 2px; border-bottom: 2px solid #cbcbcb; }
    .panel { display: flex; flex-direction: column; background: #eee; border-right: 2px solid #e5f0d8; height: 233px; }
    .body { height: 188px; display: flex; justify-content: center; }
    .name { height: 45px; padding-top: 4px; text-align: center; white-space: nowrap; display: flex; gap: 12px; justify-content: center; align-items: center; }
    .select { width: 144px; } .properties { width: 162px; } .clipboard { width: 200px; } .geometry { width: 349px; }
    .modify { width: 593px; } .view { width: 163px; } .measure { width: 141px; } .create { width: 202px; margin-right: 8px; }
    .mode { width: 112px; } .analytical { width: 153px; } .workplane { width: 179px; } .reinforcement { width: 220px; }
    .context .name { background: #e5f0d8; margin: 0 2px 3px; height: 42px; padding-top: 7px; }
    .big { display: flex; flex-direction: column; align-items: center; padding-top: 13px; white-space: pre; line-height: 41px; }
    .big .icon { margin-bottom: 8px; }
    .big.off { color: #999; width: 138px; }
    .big .icon + span { display: block; text-align: center; }
    .big.tall .icon:first-child { height: 80px; }
    .arm { margin-top: 4px; width: 108px; height: 181px; padding-top: 22px; background: #b8d7f3; border: solid #0d69c4; border-width: 3px 2px; }
    .arm .icon { margin-bottom: 20px; }
    .stack { display: flex; flex-direction: column; align-items: center; }
    .stack .top { height: 97px; padding-top: 3px; display: grid; place-items: center; }
    .stack .armed { width: 96px; height: 86px; display: grid; place-items: center; background: #b8d7f3; border: solid #0d69c4; border-width: 3px 2px; }
    .col { display: grid; grid-auto-rows: 60px; padding-top: 6px; align-items: center; justify-items: center; align-content: start; }
    .c50 { width: 50px; } .c62 { width: 62px; } .c80 { width: 80px; }
    .geo { width: 196px; justify-items: start; padding-left: 17px; }
    .row { display: flex; align-items: center; gap: 13px; }
    .row span { padding-top: 2px; }
    .row .icon + span + .icon { margin-left: 6px; }
    .start .body { justify-content: flex-start; }
    .large { display: grid; grid-auto-rows: 89px; padding-top: 6px; place-items: center; align-content: start; }
    .four { grid-template-columns: repeat(4, 98px); margin: 0 5px 0 3px; }
    .two { grid-template-columns: repeat(2, 96px); }
    .meas { grid-template-columns: 76px 46px; padding-left: 15px; }
    .vcol { grid-template-columns: 60px 29px 60px; padding-left: 6px; }
    .vcol .drop { justify-self: start; padding-left: 3px; }
    .options { display: flex; align-items: stretch; height: 65px; background: #e5f0d8; margin-left: -3px; color: #111; border-left: 1px solid #cbcbcb; }
    .mode-name { width: 523px; padding-left: 20px; line-height: 70px; }
    .opt { border-left: 2px solid #aaa; display: flex; align-items: center; gap: 8px; padding: 3px 0 0 24px; }
    .opt label { padding-top: 2px; }
    .foot { height: 5px; }
  `];
  private btn(name: string) { return html`<button aria-label=${name}>${icon(name)}</button>`; }
  private panel(cls: string, title: unknown, body: unknown) {
    return html`<section class="panel ${cls}"><div class="body">${body}</div><div class="name">${title}</div></section>`;
  }
  render() {
    const tabs = ["Architecture", "Structure", "Steel", "Precast", "Systems", "Insert", "Annotate", "Analyze", "Massing & Site", "Collaborate", "View", "Manage", "Add-Ins"];
    return html`
      <nav class="tabs">
        <button class="tab file">File</button>
        ${tabs.map((t) => html`<button class="tab">${t}</button>`)}
        <button class="tab on">Modify | Structural Foundations</button>
        <button class="state" aria-label="Ribbon display">${icon("ribMin")}${icon("arrow")}</button>
      </nav>
      <div class="panels">
        ${this.panel("select", html`Select ${icon("arrowL")}`, html`<button class="big arm">${icon("cursorBig")}<span>Modify</span></button>`)}
        ${this.panel("properties", "Properties", html`<div class="stack"><button class="top" aria-label="Type properties">${icon("typeProps")}</button><button class="armed" aria-label="Properties palette">${icon("props")}</button></div>`)}
        ${this.panel("clipboard start", "Clipboard", html`<button class="big off tall" disabled>${icon("paste")}<span>Paste</span>${icon("arrowG")}</button><div class="col c50">${["cut", "copy", "match"].map(this.btn)}</div>`)}
        ${this.panel("geometry start", "Geometry", html`
          <div class="col geo">${[["cope", "Cope"], ["cutGeo", "Cut"], ["join", "Join"]].map(([i, t]) => html`<button class="row">${icon(i)}<span>${t}</span>${icon("arrow")}</button>`)}</div>
          <div class="col">${["copeG", "beam", "wallJoin"].map(this.btn)}</div>
          <div class="col c80">${["wallOpen", "split", "demolish"].map(this.btn)}</div>
          <div class="col"><span></span>${icon("arrow")}</div>`)}
        ${this.panel("modify start", "Modify", html`
          <div class="large four">${["align", "offset", "mirrorPick", "mirrorDraw", "move", "copyEl", "rotate", "trim"].map(this.btn)}</div>
          <div class="col c62">${["splitEl", "array", "extend1"].map(this.btn)}</div>
          <div class="col c62">${["splitGap", "scale", "extend2"].map(this.btn)}</div>
          <div class="col c62">${["unpin", "pin", "del"].map(this.btn)}</div>`)}
        ${this.panel("view start", "View", html`<div class="col vcol">
          ${this.btn("bulb")}<span class="drop">${icon("arrow")}</span>${this.btn("displace")}
          ${this.btn("paint")}<span class="drop">${icon("arrow")}</span>${this.btn("lineweight")}
          ${this.btn("linework")}</div>`)}
        ${this.panel("measure start", "Measure", html`<div class="large meas">${this.btn("measureBig")}${icon("arrow")}${this.btn("dimBig")}${icon("arrow")}</div>`)}
        ${this.panel("create", "Create", html`<div class="large two">${["group", "groupNew", "assembly", "similar"].map(this.btn)}</div>`)}
        ${this.panel("mode context", "Mode", html`<button class="big">${icon("editFamily")}<span>Edit
Family</span></button>`)}
        ${this.panel("analytical context", "Analytical", html`<button class="big">${icon("highlight")}<span>Highlight
Analytical</span></button>`)}
        ${this.panel("workplane context", "Work Plane", html`<button class="big">${icon("workPlane")}<span>Pick New
Work Plane</span></button>`)}
        ${this.panel("reinforcement context", "Reinforcement", html`<button class="big">${icon("rebar")}<span>Rebar</span></button>`)}
      </div>
      <div class="options">
        <span class="mode-name">Modify | Structural Foundations</span>
        <div class="opt"><input class="tick" type="checkbox" id="grids" checked><label for="grids">Moves With Grids</label></div>
      </div>
      <div class="foot"></div>`;
  }
}

/* ---------- scroll bar ---------- */

@customElement("rv-scroll")
class Scroll extends LitElement {
  static properties = { before: { type: Number }, size: { type: Number }, after: { type: Number } };
  declare before: number;
  declare size: number;
  declare after: number;
  static styles = [base, css`
    :host { display: flex; flex-direction: column; width: 42px; flex: none; background: #efefef; }
    .btn { height: 44px; display: grid; place-items: center; flex: none; }
    .gap { flex-basis: 0; }
    .thumb { flex-basis: 0; background: #cbcbcb; }
  `];
  render() {
    return html`<button class="btn" aria-label="Scroll up">${icon("up")}</button>
      <div class="gap" style="flex-grow:${this.before}"></div><div class="thumb" style="flex-grow:${this.size}"></div><div class="gap" style="flex-grow:${this.after}"></div>
      <button class="btn" aria-label="Scroll down">${icon("down")}</button>`;
  }
}

/* ---------- properties palette ---------- */

const palette = css`
  :host { display: flex; flex-direction: column; background: #eee; border-left: 1px solid #cbcbcb; padding: 0 5px; min-height: 0; }
  .head { display: flex; height: 50px; align-items: center; justify-content: space-between; padding: 3px 7px 0 4px; font-size: 29px; color: #3a3a3a; flex: none; }
  .head h2 { font: inherit; margin: 0; }
`;

@customElement("rv-properties")
class Properties extends LitElement {
  static styles = [base, palette, css`
    :host { color: #111; }
    .type { display: flex; align-items: center; height: 182px; flex: none; border: solid #111; border-width: 2px 0 1px; padding: 0 6px 0 0; font-size: 29px; }
    .thumb { border: 2px solid #cbcbcb; background: #fff; display: block; margin: 0 9px 0 8px; }
    .what { flex: 1; color: #3a3a3a; text-align: left; }
    .filter { display: flex; height: 50px; flex: none; }
    .combo { display: grid; flex: 1; }
    .combo select { grid-area: 1 / 1; appearance: none; background: #e2e2e2; border: 2px solid #bdbdbd; padding: 5px 2px 0; height: 49px; }
    .combo .icon { grid-area: 1 / 1; align-self: center; justify-self: end; margin-right: 12px; }
    .edit { width: 155px; display: flex; align-items: center; gap: 3px; padding-left: 4px; }
    .edit .icon { width: 20px; height: 18px; }
    .list { flex: 1; min-height: 0; display: flex; overflow: hidden; }
    .clip { flex: 1; overflow: hidden; }
    table { width: 100%; border-collapse: collapse; table-layout: fixed; background: #fff; }
    td, th { height: 50px; padding: 0 0 2px 18px; text-align: left; font-weight: 400; border: 1px dotted #777; white-space: nowrap; line-height: 38px; vertical-align: middle; }
    th.group { background: #dcdcdc; border: 0; padding: 0; height: 50px; }
    .gname { display: flex; justify-content: space-between; padding: 5px 4px 0 3px; }
    .gname .icon { margin-top: -2px; }
    tr > :first-child { border-left: 0; }
    td { padding: 0 0 2px 4px; }
    .c1 { width: 285px; } .c3 { width: 30px; }
    td.val { padding-left: 2px; }
    td input:not(.tick) { border: 2px solid transparent; background: none; width: 100%; height: 47px; padding: 0 0 3px; display: block; }
    td.cur { padding: 0; } td.cur input:not(.tick) { border-color: #111; padding-left: 2px; height: 49px; }
    td .tick { margin-bottom: 2px; }
    .off { color: #6f6f6f; }
    .more { display: block; width: 27px; height: 46px; background: #e2e2e2; border: 2px solid #aaa; }
    td.last { padding: 0 1px; }
    .foot { display: flex; height: 64px; flex: none; justify-content: space-between; padding-top: 2px; }
    .foot a { color: #0563c1; padding-left: 2px; line-height: 52px; text-underline-offset: 3px; }
    .apply { width: 187px; height: 56px; background: #cbcbcb; border: 1px solid #c0c0c0; color: #808080; margin-right: 2px; padding-top: 2px; }
  `];
  render() {
    const group = (t: string) => html`<tr><th class="group" colspan="3"><div class="gname"><span>${t}</span>${icon("dblUp")}</div></th></tr>`;
    return html`
      <div class="head"><h2>Properties</h2><button aria-label="Close">${icon("close")}</button></div>
      <button class="type">
        <svg class="thumb" width="165" height="166" viewBox="0 0 160 161" aria-hidden="true">
          <path d="M0 75l95-55 65 36-96 56z" fill="#b9bab9"/><path d="M0 75l64 37v28L0 104z" fill="#b1b4ae"/><path d="M64 112l96-56v29l-96 55z" fill="#5d5e60"/>
          <path d="M0 75l95-55 65 36v29l-96 55L0 104M0 75l64 37 96-56M64 112v28" fill="none" stroke="#222" stroke-width="1.500"/>
        </svg>
        <span class="what">Footing-Rectangular<br>F1 1.85*1.5*0.5</span>${icon("arrowL")}
      </button>
      <div class="filter">
        <div class="combo"><select aria-label="Category filter"><option>Structural Foundations (1)</option></select>${icon("chevD")}</div>
        <button class="edit">${icon("editType")}Edit Type</button>
      </div>
      <div class="list">
        <div class="clip"><table>
          <colgroup><col class="c1"><col><col class="c3"></colgroup>
          ${group("Constraints")}
          <tr><th><label for="level">Level</label></th><td class="cur"><input id="level" value="R.C"></td><td></td></tr>
          <tr class="off"><th>Host</th><td>Level : R.C</td><td></td></tr>
          <tr><th><label for="off">Height Offset Fro...</label></th><td class="val"><input id="off" value="500.0"></td><td></td></tr>
          <tr><th><label for="mg">Moves With Grids</label></th><td><input class="tick" type="checkbox" id="mg" checked></td><td></td></tr>
          ${group("Materials and Finishes")}
          <tr><th><label for="mat">Structural Material</label></th><td class="val"><input id="mat" value="Concrete - Cast-..."></td><td class="last"><button class="more" aria-label="Browse material"></button></td></tr>
          ${group("Structural")}
          <tr><th><label for="ea">Enable Analytical</label></th><td><input class="tick" type="checkbox" id="ea" checked></td><td></td></tr>
        </table></div>
        <rv-scroll .before=${0} .size=${114} .after=${228}></rv-scroll>
      </div>
      <div class="foot"><a href="#help">Properties help</a><button class="apply" disabled>Apply</button></div>`;
  }
}

/* ---------- project browser ---------- */

@customElement("rv-browser")
class Browser extends LitElement {
  static styles = [base, palette, css`
    :host { color: #111; padding-bottom: 5px; }
    .wrap { flex: 1; min-height: 0; display: flex; background: #fff; }
    ul { list-style: none; margin: 0; padding: 3px 0 0; flex: 1; overflow: hidden; }
    li { display: flex; height: 44px; align-items: center; white-space: nowrap; }
    .v { width: 50px; height: 44px; flex: none; position: relative; }
    .line::before { content: ""; position: absolute; left: 20px; top: 0; bottom: 0; border-left: 1px dotted #888; }
    .end::before { bottom: 22px; }
    .h { width: 33px; height: 44px; flex: none; position: relative; margin-left: -30px; margin-right: 3px; }
    .h::before { content: ""; position: absolute; left: 1px; right: 0; top: 21px; border-top: 1px dotted #888; }
    .box { width: 25px; height: 25px; border: 1px solid #8c8c8c; background: #f5f5f5; flex: none; display: grid; place-items: center; position: relative; margin: 0 21px 0 8px; }
    .dash { width: 19px; border-top: 1px dotted #888; margin-left: -19px; margin-right: 2px; }
    .group .box { z-index: 1; }
    .group .v2 { width: 0; height: 44px; position: relative; }
    .group .v2::before { content: ""; position: absolute; left: 20px; top: 0; bottom: 0; border-left: 1px dotted #888; }
    .lastgroup .v2::before { bottom: 22px; }
    .cur { font-weight: 700; background: #e2e2e2; padding: 0 4px; margin-left: -4px; line-height: 44px; }
    .root { padding-left: 50px; gap: 7px; position: relative; }
    .root::before { content: ""; position: absolute; left: 20px; top: 0; height: 22px; border-left: 1px dotted #888; }
    .root::after { content: ""; position: absolute; left: 20px; width: 29px; top: 21px; border-top: 1px dotted #888; }
    .root.exp { padding-left: 0; } .root.exp .box { margin: 0 10px 0 8px; z-index: 1; }
  `];
  private mark(open: boolean) {
    return html`<svg class="icon" width="15" height="15" viewBox="0 0 15 15"><path d=${open ? "M1 7.500h13" : "M1 7.500h13M7.500 1v13"} stroke="#2b5797" stroke-width="3"/></svg>`;
  }
  private leaf(t: string, last = false, cont = true, cur = false) {
    return html`<li><span class="v line"></span><span class="v ${cont ? "line" : ""}"></span><span class="v line ${last ? "end" : ""}"></span><span class="h"></span><span class=${cur ? "cur" : "leaf"}>${t}</span></li>`;
  }
  private group(t: string, open: boolean, last = false) {
    return html`<li class="group ${last ? "lastgroup" : ""}"><span class="v line"></span><span class="v2"></span><button class="box" aria-label="Toggle ${t}">${this.mark(open)}</button><span class="dash"></span><span>${t}</span></li>`;
  }
  render() {
    return html`
      <div class="head"><h2>Project Browser - LVING</h2><button aria-label="Close">${icon("close")}</button></div>
      <div class="wrap">
        <ul>
          ${this.leaf("Site", true)}
          ${this.group("Ceiling Plans", false)}${this.group("3D Views", false)}${this.group("Elevations (Building Elevation)", true)}
          ${this.leaf("East")}${this.leaf("North")}${this.leaf("South")}${this.leaf("West", true)}
          ${this.group("Detail Views (Detail)", true, true)}
          ${["B2 25*70", "B2 SECTION 1-1", "B2 SECTION 2-2", "F1", "section 1-1"].map((t) => this.leaf(t, false, false))}
          ${this.leaf("section 2-2", true, false, true)}
          <li class="root">${icon("legend")}<span>Legends</span></li>
          <li class="root exp"><button class="box" aria-label="Toggle schedules">${this.mark(false)}</button>${icon("sched")}<span>Schedules/Quantities (all)</span></li>
        </ul>
        <rv-scroll .before=${303} .size=${255} .after=${77}></rv-scroll>
      </div>`;
  }
}

/* ---------- drawing ---------- */

type Pt = [number, number];
const strokes: Record<string, string> = {
  h: "m-5 1l10-2", f: "m-6 0h12", s: "m-4 4l8-8", b: "m-4-4l8 8", d: "m-5-3l10 6", e: "m-2-5l4 10", g: "m2-5l-4 10", o: "m-1 0h2",
  t: "l-17 21 21 1z", l: "l-24 10 17 12z", T: "l-28 30 32 5z",
};
const marks = (set: Record<string, Pt[]>) => Object.entries(set).map(([k, pts]) => pts.map(([x, y]) => `M${x} ${y}${strokes[k]}`).join("")).join("");

const columnHatch = marks({
  s: [[1480, 790], [1667, 885], [1476, 911], [1663, 1009], [1472, 1035], [1658, 1132], [1468, 1158], [1654, 1256], [1465, 1281], [1854, 862], [1850, 985], [1845, 1109], [1841, 1232]],
  b: [[1541, 820], [1525, 1041], [1614, 1122], [1540, 1289], [1734, 795], [1742, 1004], [1830, 1085], [1756, 1252]],
  d: [[1538, 788], [1582, 934], [1510, 1123], [1588, 1173], [1780, 942], [1708, 1131], [2352, 1542]],
  h: [[1573, 848], [1666, 836], [1568, 982], [1476, 994], [1611, 1110], [1471, 1128], [1514, 1256], [1806, 817], [1709, 964], [1845, 1079], [1841, 1213], [1748, 1225]],
  t: [[1555, 929], [1606, 1208], [1820, 952], [1871, 1232]],
  l: [[1571, 1023], [1884, 905], [1792, 1173]],
  T: [[1619, 980]],
  o: [[1761, 787]],
});
const insetHatch = marks({
  e: [[1508, 1345], [1481, 1446], [1582, 1473], [1492, 1614]],
  g: [[1481, 1408], [1509, 1509], [1645, 1418]],
  f: [[1497, 1357], [1571, 1432], [1571, 1580], [1497, 1653]],
});
const footingHatch = marks({
  h: [[1047, 1317], [1183, 1433], [1086, 1578], [1178, 1567], [1276, 1420], [1319, 1548], [1416, 1402], [1548, 1651], [1553, 1518], [1650, 1372], [1688, 1633], [1884, 1341], [1743, 1359], [2118, 1310], [2253, 1425], [2020, 1456], [2113, 1444], [1786, 1487], [1922, 1601], [2015, 1590], [2156, 1571]],
  s: [[1083, 1333], [1271, 1310], [1079, 1456], [1073, 1580], [1266, 1433], [1261, 1556], [1458, 1405], [1453, 1528], [1450, 1651], [1648, 1379], [1640, 1625], [1836, 1355], [2030, 1326], [2214, 1425], [2025, 1449], [1831, 1478], [1828, 1600], [2020, 1574], [2210, 1548]],
  b: [[1107, 1363], [1323, 1326], [1094, 1585], [1308, 1547], [1397, 1629], [1524, 1510], [1615, 1591], [2172, 1397], [2262, 1480], [1959, 1436], [2045, 1517], [1740, 1473], [1828, 1553], [2187, 1647]],
  d: [[1241, 1305], [1168, 1493], [1046, 1534], [1364, 1501], [1244, 1542], [1437, 1312], [1442, 1551], [1562, 1509], [1634, 1320], [1640, 1560], [1832, 1328], [2030, 1336], [2228, 1345], [1760, 1518], [1959, 1526], [1838, 1568], [1915, 1610], [2036, 1576], [2155, 1534], [2234, 1584]],
  t: [[1125, 1439], [1392, 1462], [1657, 1485], [1922, 1509], [2189, 1532]],
  l: [[1169, 1411], [1392, 1559], [1703, 1440], [2014, 1321], [2236, 1470], [1924, 1590]],
  T: [[1273, 1341], [1668, 1402], [2064, 1466]],
  o: [[2215, 1305]],
});
const bars = Array.from({ length: 12 }, (_, i) => Math.round(1049 + i * 112.7));

@customElement("rv-canvas")
class Canvas extends LitElement {
  static styles = [base, css`
    :host { display: flex; flex-direction: column; background: #fff; min-width: 0; min-height: 0; border-left: 1px solid #eee; }
    .tabs { display: flex; background: #cbcbcb; height: 50px; flex: none; color: #444; font-size: 29px; }
    .tab { width: 320px; flex: 0 1 320px; display: flex; align-items: center; gap: 17px; padding: 2px 14px 0 12px; }
    .tab .icon:last-child { margin-left: auto; width: 24px; height: 24px; }
    .on { background: #fff; color: #111; font-weight: 700; }
    .menu { margin-left: auto; padding: 0 16px; }
    .menu .icon { width: 18px; height: 12px; }
    .area { flex: 1; min-height: 0; display: flex; padding-right: 4px; }
    .paper { flex: 1; min-width: 0; position: relative; overflow: hidden; }
    .sheet { position: absolute; inset: 0; width: 100%; height: 100%; display: block; }
    .sheet text { font-family: "Liberation Sans", sans-serif; }
    .nav { position: absolute; right: 3px; top: 6px; width: 76px; height: 266px; background: #f3f3f3; border: 2px solid #d6d6d6; border-radius: 5px; display: flex; flex-direction: column; align-items: center; }
    .nav .x { align-self: flex-end; padding: 0 3px; }
    .nav .w { padding: 19px 0 0 8px; }
    .nav .z { border-top: 2px solid #d6d6d6; width: 100%; display: grid; place-items: center; padding: 18px 0 6px; }
    .nav .a { padding: 16px 0 13px; }
    .nav .a .icon { width: 12px; height: 8px; }
    .bottom { display: flex; height: 42px; flex: none; background: #efefef; margin: 0 4px 5px 5px; align-items: center; }
    .scale { width: 193px; padding-left: 65px; text-align: left; font-size: 29px; }
    .vc { width: 52px; height: 42px; display: grid; place-items: center; }
    .track { flex: 1; height: 42px; display: flex; }
    .gap { flex-basis: 0; } .thumb { flex-basis: 0; background: #cbcbcb; }
    .grip { margin: 0 6px 0 19px; }
    .right { width: 30px; display: grid; place-items: center; }
    .left { width: 50px; display: grid; place-items: center; }
  `];
  render() {
    const tabs = [["tabSection", "B2 25*70"], ["tab3d", "{3D}"], ["tabPlan", "R.C"], ["tabPlan", "Level 2"], ["tabSection", "F1"], ["tabSection", "section 1-1"], ["tabSectionOn", "section 2-2"]];
    const blue = "#003bbf";
    return html`
      <div class="tabs">
        ${tabs.map(([i, t], n) => html`<button class="tab ${n === 6 ? "on" : ""}">${icon(i)}<span>${t}</span>${n === 6 ? icon("close") : nothing}</button>`)}
        <button class="menu" aria-label="Open views">${icon("arrowL")}</button>
      </div>
      <div class="area">
        <div class="paper">
          <svg class="sheet" viewBox="657 486 3137 1463" preserveAspectRatio="xMinYMin meet" role="img" aria-label="Footing section">
            <defs><clipPath id="crop"><path d="M920 787h1439v1002H920z"/></clipPath></defs>
            <path d="M920.500 787.500h1438v1001h-1438z" fill="none" stroke="#111" stroke-width="1.500"/>
            <g clip-path="url(#crop)" fill="none" stroke-linecap="round" stroke-linejoin="round">
              <path d=${columnHatch} stroke="#000" stroke-width="6.500"/>
              <path d="M1770 1180l14 6 6-10" stroke="#000" stroke-width="5"/>
              <path d="M1888 780V1297" stroke="#000" stroke-width="18"/>
              <path d="M1450 1298H995v364H2359M1888 1298h471" stroke=${blue} stroke-width="12.500"/>
              <path d=${insetHatch} stroke="#000" stroke-width="6.500"/>
              <path d=${footingHatch} stroke=${blue} stroke-width="6.500"/>
              <path d="M1480 1297l-25 5 18 11z" stroke=${blue} stroke-width="5"/>
              <path d="M1481 1292l-13 6" stroke="#000" stroke-width="6"/>
              <path d="M1450 780V1297M1888 1280V1297" stroke="#000" stroke-width="18"/>
              <path d="M2345 1298h30M2345 1662h30" stroke="#000" stroke-width="17"/>
              <path d="${bars.map((x) => `M${x} 1349V1607`).join("")}M1469 1299V1662M1651 1299V1662" stroke="#000" stroke-width="7"/>
              <path d="M1049 1585q0 22 22 22H2266q20 0 20-22V1352" stroke="#000" stroke-width="7"/>
            </g>
            ${bars.map((x) => svg`<circle cx=${x} cy="1607" r="7.500"/>`)}
            <g fill="none" stroke="#6fb5f2" stroke-width="1.500"><path d="M1559.500 1193v50M1669.500 1193v50M1559 1212h111M1547 1224l25-25M1657 1224l25-25"/></g>
            <g fill="#6db5f1" stroke="#7d7d7d" stroke-width="2"><circle cx="1560" cy="1228" r="8"/><circle cx="1669" cy="1228" r="8"/></g>
            <path d="M1598 1237v25M1631 1237v25M1598 1246h33M1603 1242v8M1626 1242v8" stroke=${blue} stroke-width="2" fill="none"/>
            <text x="1580" y="1199" font-size="27" fill=${blue}>150.1</text>
          </svg>
          <div class="nav">
            <button class="x" aria-label="Close navigation bar">${icon("circX")}</button>
            <button class="w" aria-label="Steering wheel">${icon("wheel")}</button><button class="a" aria-label="Wheel options">${icon("arrowG")}</button>
            <button class="z" aria-label="Zoom in region">${icon("zoomReg")}</button><button class="a" aria-label="Zoom options">${icon("arrowG")}</button>
            <button class="x" aria-label="Navigation options">${icon("circX")}</button>
          </div>
        </div>
        <rv-scroll .before=${667} .size=${44} .after=${664}></rv-scroll>
      </div>
      <div class="bottom">
        <button class="scale">1 : 50</button>
        ${["vDetail", "vCube", "vSunOff", "vShadowOff", "vCrop", "vCropShow", "vGlasses", "vBulb", "vTemp", "vAnalytic", "vConstr"].map((n) => html`<button class="vc" aria-label=${n}>${icon(n)}</button>`)}
        <button class="left" aria-label="Scroll left">${icon("leftCh")}</button>
        <div class="track"><div class="gap" style="flex-grow:1114"></div><div class="thumb" style="flex-grow:43"></div><div class="gap" style="flex-grow:1120"></div></div>
        <button class="right" aria-label="Scroll right">${icon("rightCh")}</button>
        <svg class="grip icon" width="24" height="42" viewBox="0 0 24 42" aria-hidden="true"><path d="M16 18h4v4h-4zM16 25h4v4h-4zM9 25h4v4H9zM16 32h4v4h-4zM9 32h4v4H9zM2 32h4v4H2z" fill="#bbb"/></svg>
      </div>`;
  }
}

/* ---------- status bar ---------- */

@customElement("rv-status")
class Status extends LitElement {
  static styles = [base, css`
    :host { display: flex; height: 64px; background: #cbcbcb; color: #111; padding: 0 46px 0 2px; }
    .hint { width: 1606px; line-height: 65px; white-space: nowrap; }
    .ic { height: 62px; display: grid; place-items: center; }
    .combo { display: grid; width: 508px; height: 46px; margin: 2px 0 0 10px; }
    .combo select { grid-area: 1 / 1; appearance: none; background: #fff; border: 2px solid #e3e3e3; padding: 3px 2px 0; color: #777; line-height: 38px; }
    .combo .icon { grid-area: 1 / 1; align-self: center; justify-self: end; margin-right: 11px; opacity: .6; }
    .n { line-height: 76px; margin-left: 12px; width: 36px; }
    .req { margin-left: 7px; } .opt { margin-left: 13px; }
    .right { margin-left: auto; display: flex; gap: 10px; }
    .count { line-height: 66px; margin-left: -8px; }
  `];
  render() {
    return html`<span class="hint">Click to select, TAB for alternates, CTRL adds, SHIFT unselects.</span>
      <button class="ic" aria-label="Worksets">${icon("worksets")}</button>
      <div class="combo"><select aria-label="Active workset"><option></option></select>${icon("chevD")}</div>
      <button class="ic req" aria-label="Editing requests">${icon("editReq")}</button><span class="n">:0</span>
      <button class="ic" aria-label="Design options">${icon("designOpt")}</button>
      <button class="ic opt" aria-label="Add to set">${icon("addOpt")}</button>
      <div class="combo"><select aria-label="Design option"><option>Main Model</option></select>${icon("chevD")}</div>
      <div class="right">
        ${["selLinks", "selUnder", "selPin", "selFace", "selDrag", "gear", "filter"].map((n) => html`<button class="ic" aria-label=${n}>${icon(n)}</button>`)}
        <span class="count">:1</span>
      </div>`;
  }
}

/* ---------- taskbar ---------- */

@customElement("win-taskbar")
class Taskbar extends LitElement {
  static styles = [base, css`
    :host { display: flex; height: 100px; background: linear-gradient(#2a2a29, #1e1e1c); color: #fff; padding-right: 9px; }
    .start { width: 120px; display: grid; place-items: center; }
    .find { width: 858px; background: #333; border: 3px solid #636363; border-bottom-width: 2px; display: flex; align-items: center; padding: 2px 0 0 28px; gap: 33px; }
    .find input { flex: 1; background: none; border: 0; outline: 0; font-size: 35px; padding: 0; height: 60px; }
    .find input::placeholder { color: #cfcfcf; }
    .app { width: 124px; display: grid; place-items: center; border-bottom: 5px solid transparent; padding-top: 5px; }
    .run { border-image: linear-gradient(90deg, transparent 11px, #76b9ed 11px calc(100% - 11px), transparent calc(100% - 11px)) 0 0 5 0; }
    .active { background: #46494d; border-bottom-color: #76b9ed; }
    .tray { margin-left: auto; display: flex; align-items: stretch; padding-top: 2px; }
    .weather { display: flex; align-items: center; gap: 22px; font-size: 32px; margin-right: 30px; }
    .t { width: 81px; display: grid; place-items: center; }
    .lang { width: 116px; }
    .clock { width: 142px; line-height: 49px; text-align: center; }
    .note { width: 135px; display: grid; place-items: center; padding: 12px 0 0 10px; }
    .peek { width: 2px; background: #6c6c6c; }
  `];
  render() {
    const apps: [string, string][] = [["cortana", ""], ["taskview", ""], ["autocad", ""], ["mail", ""], ["store", ""], ["folder", "run"], ["chrome", "run"], ["revit", "active"], ["palette", "run"]];
    return html`
      <button class="start" aria-label="Start">${icon("start")}</button>
      <label class="find">${icon("search")}<input placeholder="Type here to search" aria-label="Search"></label>
      ${apps.map(([n, c]) => html`<button class="app ${c}" aria-label=${n}>${icon(n)}</button>`)}
      <div class="tray">
        <button class="weather">${icon("news")}<span>26°C</span><span>Partly sunny</span></button>
        ${["chevU", "meet", "cloud", "wifi", "sound", "battery", "pen"].map((n) => html`<button class="t" aria-label=${n}>${icon(n)}</button>`)}
        <button class="lang">ENG</button>
        <button class="clock">1:41 PM<br>10/4/2021</button>
        <button class="note" aria-label="Notifications">${icon("notif")}</button>
        <span class="peek"></span>
      </div>`;
  }
}

@customElement("app-root")
class AppRoot extends LitElement {
  static styles = [base, css`
    :host { display: flex; flex-direction: column; height: 100vh; overflow: hidden; background: #cbcbcb; position: relative; }
    .main { flex: 1; min-height: 0; display: flex; }
    .side { width: 651px; flex: none; display: flex; flex-direction: column; gap: 5px; margin-right: 5px; }
    .side > * { flex: 1 1 0; }
    rv-canvas { flex: 1; }
    .mark { position: absolute; left: 1680px; bottom: 52px; width: 480px; text-align: center; pointer-events: none; color: rgba(175, 175, 175, .38); font-weight: 700; }
    .ar { font-family: "DejaVu Sans", sans-serif; font-size: 132px; line-height: 150px; display: block; }
    .en { font-size: 72px; line-height: 64px; display: block; }
  `];
  render() {
    return html`
      <rv-titlebar></rv-titlebar>
      <rv-ribbon></rv-ribbon>
      <div class="main">
        <div class="side"><rv-properties></rv-properties><rv-browser></rv-browser></div>
        <rv-canvas></rv-canvas>
      </div>
      <rv-status></rv-status>
      <win-taskbar></win-taskbar>
      <div class="mark"><span class="ar" lang="ar">مستقل</span><span class="en">mostaql.com</span></div>`;
  }
}
